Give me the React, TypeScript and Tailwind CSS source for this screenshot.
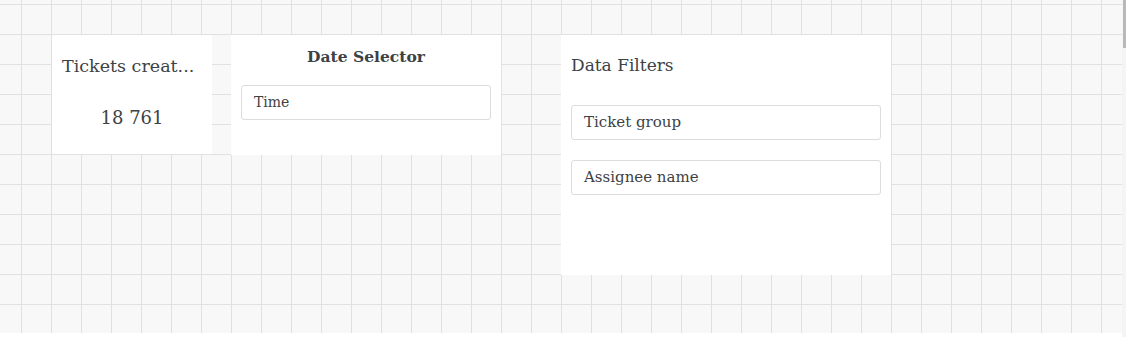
import React from "react";

const font = { fontFamily: '"DejaVu Serif", "Liberation Serif", serif' };

function Field({ label, className }: { label: string; className: string }) {
  return (
    <div
      className={`flex h-[35px] items-center rounded-[3px] border border-[#dcdcdc] bg-white px-[12px] text-[#3d4245] ${className}`}
    >
      {label}
    </div>
  );
}

export default function App() {
  return (
    <div className="relative h-[337px] w-[1126px] overflow-hidden bg-white" style={font}>
      <div className="h-[333px] w-[1122px] bg-[#f8f8f8] bg-[linear-gradient(to_right,#e1e1e1_1px,transparent_1px),linear-gradient(to_bottom,#e1e1e1_1px,transparent_1px)] bg-[size:30px_30px] bg-[position:21px_4px]">
        <div className="flex items-start pl-[52px] pt-[35px]">
          <div className="flex h-[119px] w-[160px] flex-col rounded-[2px] bg-white px-[10px] pt-[1px]">
            <div className="mt-[18px] h-[24px] whitespace-nowrap text-[17.5px] leading-[24px] text-[#3d4245]">Tickets creat...</div>
            <div className="mt-[27px] text-center text-[18px] leading-[26px] text-[#3d4245]">18 761</div>
          </div>
          <div className="ml-[19px] flex h-[120px] w-[270px] flex-col bg-white px-[10px]">
            <div className="mt-[11px] text-center text-[15.5px] font-bold leading-[22px] text-[#3d4245]">Date Selector</div>
            <Field label="Time" className="mt-[17px] text-[14px]" />
          </div>
          <div className="ml-[60px] flex h-[240px] w-[330px] flex-col bg-white px-[10px]">
            <div className="mt-[18px] text-[17px] leading-[24px] text-[#3d4245]">Data Filters</div>
            <Field label="Ticket group" className="mt-[28px] text-[15px]" />
            <Field label="Assignee name" className="mt-[20px] text-[15px]" />
          </div>
        </div>
      </div>
      <div className="absolute right-0 top-0 h-[337px] w-[4px] bg-[#f4f4f4]">
        <div className="ml-[1px] h-[48px] w-[3px] bg-[#b8b8b8]" />
      </div>
    </div>
  );
}
